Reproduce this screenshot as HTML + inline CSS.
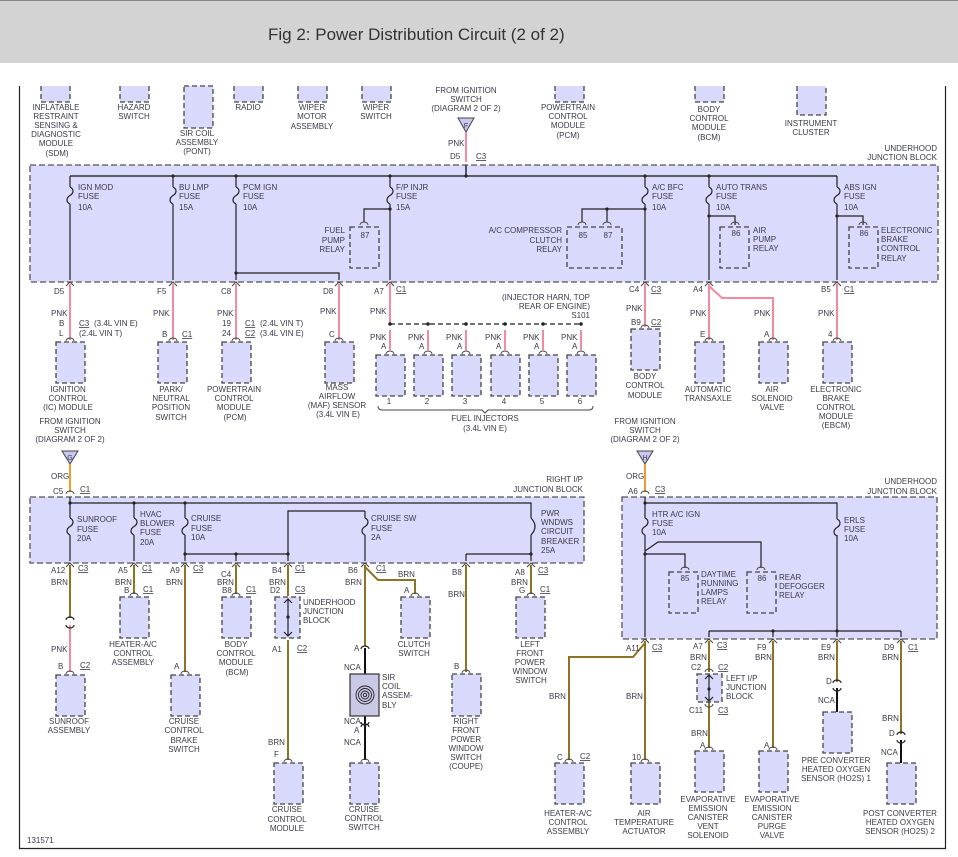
<!DOCTYPE html>
<html><head><meta charset="utf-8"><style>
html,body{margin:0;padding:0;background:#fff;width:958px;height:857px;overflow:hidden}
svg{display:block}
text{font-family:"Liberation Sans",sans-serif;font-size:8px;fill:#3a3a4a}
.m text,text.m{text-anchor:middle}
.r{text-anchor:end}
.b{fill:#d9d9fb;stroke:#444;stroke-width:1.3;stroke-dasharray:5,3}
.jb{fill:#dadafc;stroke:#555;stroke-width:1.3;stroke-dasharray:6,3}
.k{stroke:#222;stroke-width:1.2;fill:none}
.g{stroke:#555;stroke-width:1.2;fill:none}
.p{stroke:#f4899f;stroke-width:2;fill:none}
.n{stroke:#8c7424;stroke-width:2;fill:none}
.o{stroke:#f59a2c;stroke-width:2;fill:none}
.u{text-decoration:underline}
.a{stroke:#444;stroke-width:1;fill:none}
</style></head><body>
<svg width="958" height="857" viewBox="0 0 958 857" xmlns="http://www.w3.org/2000/svg">
<rect x="0" y="0" width="958" height="63" fill="#d3d3d3"/>
<line x1="0" y1="0.5" x2="958" y2="0.5" stroke="#888"/>
<text x="268" y="40" style="font-size:17px;fill:#333">Fig 2: Power Distribution Circuit (2 of 2)</text>
<path d="M19.5 86V848.5H945.5V86" stroke="#222" stroke-width="1.2" fill="none"/>

<!-- top components -->
<path class="b" d="M41 86V102H70V86"/>
<path class="b" d="M120 86V102H149V86"/>
<rect class="b" x="184" y="86" width="29" height="42"/>
<path class="b" d="M234 86V102H263V86"/>
<path class="b" d="M298 86V102H327V86"/>
<path class="b" d="M362 86V102H391V86"/>
<path class="b" d="M555 86V102H584V86"/>
<path class="b" d="M695 86V102H724V86"/>
<path class="b" d="M797 86V115H826V86"/>
<g class="m">
<text x="56" y="110">INFLATABLE</text><text x="56" y="119">RESTRAINT</text><text x="56" y="128">SENSING &amp;</text><text x="56" y="137">DIAGNOSTIC</text><text x="56" y="146">MODULE</text><text x="57" y="156">(SDM)</text>
<text x="134" y="110">HAZARD</text><text x="134" y="119">SWITCH</text>
<text x="197" y="136">SIR COIL</text><text x="197" y="145">ASSEMBLY</text><text x="197" y="154">(PONT)</text>
<text x="248" y="110">RADIO</text>
<text x="312" y="110">WIPER</text><text x="312" y="119">MOTOR</text><text x="312" y="129">ASSEMBLY</text>
<text x="376" y="110">WIPER</text><text x="376" y="119">SWITCH</text>
<text x="466" y="93">FROM IGNITION</text><text x="466" y="102">SWITCH</text><text x="466" y="111">(DIAGRAM 2 OF 2)</text>
<text x="568" y="110">POWERTRAIN</text><text x="568" y="119">CONTROL</text><text x="568" y="128">MODULE</text><text x="568" y="138">(PCM)</text>
<text x="709" y="112">BODY</text><text x="709" y="121">CONTROL</text><text x="709" y="130">MODULE</text><text x="709" y="140">(BCM)</text>
<text x="811" y="126">INSTRUMENT</text><text x="811" y="135">CLUSTER</text>
</g>
<path d="M458 118H474L466 132Z" fill="#c8c8f0" stroke="#444"/><text x="466" y="128" class="m" style="font-size:7px">F</text>
<path class="p" d="M466 132V162"/>
<text x="448" y="146">PNK</text><text x="450" y="159">D5</text><text x="476" y="159" class="u">C3</text>
<text x="937" y="151" class="r">UNDERHOOD</text><text x="937" y="160" class="r">JUNCTION BLOCK</text>

<!-- top junction block -->
<rect class="jb" x="30" y="165" width="908" height="117"/>
<path d="M70 176H837M466 165V176" stroke="#333" stroke-width="1.6" fill="none"/>
<g class="k">
<path d="M70 176V187M70 204V280"/>
<path d="M173 176V187M173 204V280"/>
<path d="M236 176V187M236 204V280M236 273H339V280"/>
<path d="M390 176V187M390 204V280M390 209H364V222"/>
<path d="M645 176V187M645 204V280M645 209H582V222M607 209V222"/>
<path d="M709 176V187M709 204V280M709 216H735V225"/>
<path d="M837 176V187M837 204V280M837 216H863V225"/>
<path d="M70 187c4 2 4 6 0 8.5c-4 2.5 -4 6.5 0 8.5M173 187c4 2 4 6 0 8.5c-4 2.5 -4 6.5 0 8.5M236 187c4 2 4 6 0 8.5c-4 2.5 -4 6.5 0 8.5M390 187c4 2 4 6 0 8.5c-4 2.5 -4 6.5 0 8.5M645 187c4 2 4 6 0 8.5c-4 2.5 -4 6.5 0 8.5M709 187c4 2 4 6 0 8.5c-4 2.5 -4 6.5 0 8.5M837 187c4 2 4 6 0 8.5c-4 2.5 -4 6.5 0 8.5"/>
</g>
<g fill="#222"><circle cx="173" cy="176" r="1.6"/><circle cx="236" cy="176" r="1.6"/><circle cx="390" cy="176" r="1.6"/><circle cx="466" cy="176" r="1.6"/><circle cx="645" cy="176" r="1.6"/><circle cx="709" cy="176" r="1.6"/><circle cx="236" cy="273" r="1.6"/><circle cx="390" cy="209" r="1.6"/><circle cx="645" cy="209" r="1.6"/><circle cx="607" cy="209" r="1.6"/><circle cx="709" cy="216" r="1.6"/><circle cx="837" cy="216" r="1.6"/></g>
<g>
<text x="78" y="190">IGN MOD</text><text x="78" y="199">FUSE</text><text x="78" y="210">10A</text>
<text x="179" y="190">BU LMP</text><text x="179" y="199">FUSE</text><text x="179" y="210">15A</text>
<text x="243" y="190">PCM IGN</text><text x="243" y="199">FUSE</text><text x="243" y="210">10A</text>
<text x="396" y="190">F/P INJR</text><text x="396" y="199">FUSE</text><text x="396" y="210">15A</text>
<text x="652" y="190">A/C BFC</text><text x="652" y="199">FUSE</text><text x="652" y="210">10A</text>
<text x="716" y="190">AUTO TRANS</text><text x="716" y="199">FUSE</text><text x="716" y="210">10A</text>
<text x="844" y="190">ABS IGN</text><text x="844" y="199">FUSE</text><text x="844" y="210">10A</text>
</g>
<rect class="b" x="350" y="227" width="29" height="41"/>
<rect class="b" x="567" y="227" width="55" height="41"/>
<rect class="b" x="720" y="227" width="29" height="41"/>
<rect class="b" x="849" y="227" width="29" height="41"/>
<g class="a"><path d="M360 225a4 3 0 0 1 8 0M578 225a4 3 0 0 1 8 0M603 225a4 3 0 0 1 8 0M731 225a4 3 0 0 1 8 0M859 225a4 3 0 0 1 8 0"/></g>
<g class="m"><text x="365" y="238">87</text><text x="583" y="238">85</text><text x="608" y="238">87</text><text x="736" y="236">86</text><text x="864" y="236">86</text></g>
<g class="r"><text x="345" y="233">FUEL</text><text x="345" y="243">PUMP</text><text x="345" y="252">RELAY</text>
<text x="562" y="233">A/C COMPRESSOR</text><text x="562" y="243">CLUTCH</text><text x="562" y="252">RELAY</text></g>
<text x="753" y="233">AIR</text><text x="753" y="242">PUMP</text><text x="753" y="251">RELAY</text>
<text x="881" y="233">ELECTRONIC</text><text x="881" y="242">BRAKE</text><text x="881" y="251">CONTROL</text><text x="881" y="261">RELAY</text>

<!-- below top block -->
<g class="a"><path d="M66 286l4-4 4 4M169 286l4-4 4 4M232 286l4-4 4 4M335 286l4-4 4 4M386 286l4-4 4 4M641 286l4-4 4 4M705 286l4-4 4 4M833 286l4-4 4 4"/></g>
<g><text x="54" y="294">D5</text><text x="157" y="294">F5</text><text x="221" y="294">C8</text><text x="323" y="294">D8</text><text x="374" y="294">A7</text><text x="396" y="292" class="u">C1</text>
<text x="629" y="292">C4</text><text x="651" y="292" class="u">C3</text><text x="693" y="292">A4</text><text x="821" y="292">B5</text><text x="844" y="292" class="u">C1</text></g>
<g class="p"><path d="M70 284V340M173 284V340M236 284V340M339 284V340M390 284V324M645 284V327M709 284V340M709 286L722 298H773V340M837 284V340"/>
<path d="M390 330V350M428 330V350M466 330V350M505 330V350M543 330V350M581 330V350"/></g>
<path d="M390 324H581" stroke="#222" stroke-dasharray="5,3" stroke-width="1.2"/>
<g fill="#222"><circle cx="390" cy="324" r="1.8"/><circle cx="428" cy="324" r="1.8"/><circle cx="466" cy="324" r="1.8"/><circle cx="505" cy="324" r="1.8"/><circle cx="543" cy="324" r="1.8"/><circle cx="581" cy="324" r="1.8"/></g>
<g class="r"><text x="590" y="300">(INJECTOR HARN, TOP</text><text x="590" y="309">REAR OF ENGINE)</text><text x="590" y="318">S101</text></g>
<g>
<text x="51" y="316">PNK</text><text x="59" y="326">B</text><text x="59" y="336">L</text><text x="79" y="326" class="u">C3</text><text x="94" y="326">(3.4L VIN E)</text><text x="79" y="336">(2.4L VIN T)</text>
<text x="153" y="316">PNK</text><text x="162" y="337">B</text><text x="182" y="337" class="u">C1</text>
<text x="217" y="316">PNK</text><text x="222" y="326">19</text><text x="222" y="336">24</text><text x="245" y="326" class="u">C1</text><text x="260" y="326">(2.4L VIN T)</text><text x="245" y="336" class="u">C2</text><text x="260" y="336">(3.4L VIN E)</text>
<text x="320" y="314">PNK</text><text x="329" y="337">C</text>
<text x="370" y="314">PNK</text>
<text x="370" y="340">PNK</text><text x="408" y="340">PNK</text><text x="446" y="340">PNK</text><text x="485" y="340">PNK</text><text x="523" y="340">PNK</text><text x="561" y="340">PNK</text>
<text x="381" y="349">A</text><text x="419" y="349">A</text><text x="457" y="349">A</text><text x="496" y="349">A</text><text x="534" y="349">A</text><text x="572" y="349">A</text>
<text x="626" y="311">PNK</text><text x="631" y="325">B9</text><text x="651" y="325" class="u">C2</text>
<text x="690" y="316">PNK</text><text x="700" y="337">E</text>
<text x="754" y="316">PNK</text><text x="764" y="337">A</text>
<text x="818" y="316">PNK</text><text x="828" y="337">4</text>
</g>
<rect class="b" x="56" y="342" width="29" height="41"/>
<rect class="b" x="158" y="342" width="29" height="41"/>
<rect class="b" x="222" y="342" width="29" height="41"/>
<rect class="b" x="325" y="342" width="29" height="41"/>
<rect class="b" x="376" y="355" width="29" height="41"/>
<rect class="b" x="414" y="355" width="29" height="41"/>
<rect class="b" x="452" y="355" width="29" height="41"/>
<rect class="b" x="491" y="355" width="29" height="41"/>
<rect class="b" x="529" y="355" width="29" height="41"/>
<rect class="b" x="567" y="355" width="29" height="41"/>
<rect class="b" x="631" y="329" width="29" height="41"/>
<rect class="b" x="695" y="342" width="29" height="41"/>
<rect class="b" x="759" y="342" width="29" height="41"/>
<rect class="b" x="823" y="342" width="29" height="41"/>
<g class="a"><path d="M66 341a4 3 0 0 1 8 0M169 341a4 3 0 0 1 8 0M232 341a4 3 0 0 1 8 0M335 341a4 3 0 0 1 8 0M386 354a4 3 0 0 1 8 0M424 354a4 3 0 0 1 8 0M462 354a4 3 0 0 1 8 0M501 354a4 3 0 0 1 8 0M539 354a4 3 0 0 1 8 0M577 354a4 3 0 0 1 8 0M641 328a4 3 0 0 1 8 0M705 341a4 3 0 0 1 8 0M769 341a4 3 0 0 1 8 0M833 341a4 3 0 0 1 8 0"/>
<path d="M378 406q0 4 4 4H482l3 3 3-3H589q4 0 4-4"/></g>
<g class="m">
<text x="389" y="404">1</text><text x="427" y="404">2</text><text x="465" y="404">3</text><text x="504" y="404">4</text><text x="542" y="404">5</text><text x="580" y="404">6</text>
<text x="485" y="421">FUEL INJECTORS</text><text x="485" y="431">(3.4L VIN E)</text>
<text x="68" y="392">IGNITION</text><text x="68" y="401">CONTROL</text><text x="68" y="410">(IC) MODULE</text>
<text x="171" y="392">PARK/</text><text x="171" y="401">NEUTRAL</text><text x="171" y="410">POSITION</text><text x="171" y="420">SWITCH</text>
<text x="234" y="392">POWERTRAIN</text><text x="234" y="401">CONTROL</text><text x="234" y="410">MODULE</text><text x="235" y="420">(PCM)</text>
<text x="337" y="390">MASS</text><text x="337" y="399">AIRFLOW</text><text x="337" y="408">(MAF) SENSOR</text><text x="338" y="417">(3.4L VIN E)</text>
<text x="645" y="379">BODY</text><text x="645" y="388">CONTROL</text><text x="645" y="398">MODULE</text>
<text x="708" y="392">AUTOMATIC</text><text x="708" y="401">TRANSAXLE</text>
<text x="772" y="392">AIR</text><text x="772" y="401">SOLENOID</text><text x="772" y="410">VALVE</text>
<text x="836" y="392">ELECTRONIC</text><text x="836" y="401">BRAKE</text><text x="836" y="410">CONTROL</text><text x="836" y="419">MODULE</text><text x="836" y="428">(EBCM)</text>
<text x="70" y="424">FROM IGNITION</text><text x="70" y="433">SWITCH</text><text x="70" y="442">(DIAGRAM 2 OF 2)</text>
<text x="645" y="424">FROM IGNITION</text><text x="645" y="433">SWITCH</text><text x="645" y="442">(DIAGRAM 2 OF 2)</text>
</g>

<!-- lower feeds -->
<path d="M62 451H78L70 464Z" fill="#c8c8f0" stroke="#444"/><text x="70" y="460" class="m" style="font-size:7px">G</text>
<path d="M637 451H653L645 464Z" fill="#c8c8f0" stroke="#444"/><text x="645" y="460" class="m" style="font-size:7px">H</text>
<path class="o" d="M70 464V492M645 464V492"/>
<g class="a"><path d="M66 494a4 3 0 0 1 8 0M641 494a4 3 0 0 1 8 0"/></g>
<text x="51" y="479">ORG</text><text x="53" y="494">C5</text><text x="80" y="492" class="u">C1</text>
<text x="626" y="479">ORG</text><text x="628" y="494">A6</text><text x="655" y="492" class="u">C3</text>
<g class="r"><text x="583" y="482">RIGHT I/P</text><text x="583" y="492">JUNCTION BLOCK</text><text x="937" y="484">UNDERHOOD</text><text x="937" y="494">JUNCTION BLOCK</text></g>

<!-- lower left block -->
<rect class="jb" x="30" y="497" width="554" height="66"/>
<g class="k">
<path d="M70 497V518M70 535V561M70 503H531V518M531 535V561M466 554H531M466 554V561"/>
<path d="M134 503V518M134 535V561M185 503V518M185 535V561M185 554H288M288 554V561M288 554V511H365M365 511V518M365 535V561"/>
<path d="M70 518c4 2 4 6 0 8.5c-4 2.5 -4 6.5 0 8.5M134 518c4 2 4 6 0 8.5c-4 2.5 -4 6.5 0 8.5M185 518c4 2 4 6 0 8.5c-4 2.5 -4 6.5 0 8.5M365 518c4 2 4 6 0 8.5c-4 2.5 -4 6.5 0 8.5M531 518q8 8.5 0 17"/>
<path d="M236 554V561"/>
</g>
<g fill="#222"><circle cx="70" cy="503" r="1.6"/><circle cx="134" cy="503" r="1.6"/><circle cx="185" cy="503" r="1.6"/><circle cx="236" cy="554" r="1.6"/><circle cx="288" cy="554" r="1.6"/><circle cx="185" cy="554" r="1.6"/><circle cx="531" cy="554" r="1.6"/></g>
<text x="77" y="522">SUNROOF</text><text x="77" y="532">FUSE</text><text x="77" y="541">20A</text>
<text x="140" y="517">HVAC</text><text x="140" y="526">BLOWER</text><text x="140" y="535">FUSE</text><text x="140" y="545">20A</text>
<text x="191" y="521">CRUISE</text><text x="191" y="531">FUSE</text><text x="191" y="540">10A</text>
<text x="371" y="521">CRUISE SW</text><text x="371" y="531">FUSE</text><text x="371" y="540">2A</text>
<text x="541" y="516">PWR</text><text x="541" y="525">WNDWS</text><text x="541" y="534">CIRCUIT</text><text x="541" y="544">BREAKER</text><text x="541" y="553">25A</text>

<!-- lower right block -->
<rect class="jb" x="622" y="497" width="315" height="142"/>
<g class="k">
<path d="M645 497V518M645 535V637M645 503H837V519M837 535V637"/>
<path d="M645 554H685V568M645 551L658 542H761V568"/>
<path d="M709 631H901M709 631V637M773 631V637M901 631V637"/>
<path d="M645 518c4 2 4 6 0 8.5c-4 2.5 -4 6.5 0 8.5M837 519c4 2 4 6 0 8.5c-4 2.5 -4 6.5 0 8.5"/>
</g>
<g fill="#222"><circle cx="645" cy="503" r="1.6"/><circle cx="645" cy="554" r="1.6"/><circle cx="773" cy="631" r="1.6"/><circle cx="837" cy="631" r="1.6"/></g>
<rect class="b" x="669" y="572" width="29" height="41"/>
<rect class="b" x="747" y="572" width="29" height="41"/>
<g class="a"><path d="M681 570a4 3 0 0 1 8 0M757 570a4 3 0 0 1 8 0"/></g>
<g class="m"><text x="685" y="581">85</text><text x="762" y="581">86</text></g>
<text x="652" y="517">HTR A/C IGN</text><text x="652" y="526">FUSE</text><text x="652" y="535">10A</text>
<text x="844" y="523">ERLS</text><text x="844" y="532">FUSE</text><text x="844" y="541">10A</text>
<text x="701" y="577">DAYTIME</text><text x="701" y="586">RUNNING</text><text x="701" y="595">LAMPS</text><text x="701" y="604">RELAY</text>
<text x="779" y="580">REAR</text><text x="779" y="589">DEFOGGER</text><text x="779" y="598">RELAY</text>

<!-- lower left outputs -->
<g class="a"><path d="M66 567l4-4 4 4M130 567l4-4 4 4M181 567l4-4 4 4M232 567l4-4 4 4M284 567l4-4 4 4M361 567l4-4 4 4M462 567l4-4 4 4M527 567l4-4 4 4
M641 643l4-4 4 4M705 643l4-4 4 4M769 643l4-4 4 4M833 643l4-4 4 4M897 643l4-4 4 4"/></g>
<g class="n">
<path d="M70 565V618M134 565V594M185 565V672M236 565V594M288 565V596M288 640V760M365 565V646M365 567L378 580H415V594M466 565V672M531 565V594"/>
<path d="M645 641V760M645 643L633 657H569V760M709 641V672M709 702V748M773 641V748M837 641V682M901 641V734"/>
</g>
<path class="p" d="M70 625V672"/>
<path class="k" d="M66 620a4 3 0 0 1 8 0M66 625a4 3 0 0 0 8 0"/>
<path d="M365 648V674M365 716V760M837 688V712M901 740V763" stroke="#111" stroke-width="2" fill="none"/>
<g class="k"><path d="M361 649a4 3 0 0 1 8 0M361 722a4 3 0 0 0 8 0M361 727a4 3 0 0 1 8 0M833 683a4 3 0 0 1 8 0M833 688a4 3 0 0 0 8 0M897 735a4 3 0 0 1 8 0M897 740a4 3 0 0 0 8 0"/></g>
<g>
<text x="51" y="573">A12</text><text x="78" y="571" class="u">C3</text>
<text x="118" y="573">A5</text><text x="142" y="571" class="u">C1</text>
<text x="170" y="573">A9</text><text x="193" y="571" class="u">C3</text>
<text x="221" y="577">C4</text><text x="272" y="573">B4</text><text x="295" y="571" class="u">C1</text>
<text x="348" y="573">B6</text><text x="376" y="571" class="u">C1</text>
<text x="452" y="575">B8</text><text x="515" y="575">A8</text><text x="538" y="573" class="u">C3</text>
<text x="51" y="585">BRN</text><text x="115" y="585">BRN</text><text x="166" y="585">BRN</text><text x="217" y="585">BRN</text><text x="269" y="585">BRN</text><text x="345" y="585">BRN</text><text x="398" y="577">BRN</text><text x="448" y="597">BRN</text><text x="511" y="585">BRN</text>
<text x="124" y="593">B</text><text x="143" y="592" class="u">C1</text>
<text x="222" y="593">B8</text><text x="246" y="592" class="u">C1</text>
<text x="270" y="593">D2</text><text x="295" y="592" class="u">C3</text>
<text x="404" y="593">A</text><text x="519" y="593">G</text><text x="540" y="592" class="u">C1</text>
<text x="51" y="652">PNK</text><text x="58" y="669">B</text><text x="80" y="668" class="u">C2</text>
<text x="174" y="669">A</text><text x="272" y="652">A1</text><text x="297" y="651" class="u">C2</text>
<text x="354" y="651">A</text><text x="344" y="670">NCA</text><text x="344" y="724">NCA</text><text x="354" y="733">A</text><text x="344" y="745">NCA</text>
<text x="454" y="669">B</text><text x="268" y="745">BRN</text><text x="274" y="757">F</text>
</g>
<rect class="b" x="56" y="675" width="29" height="41"/>
<rect class="b" x="120" y="597" width="29" height="41"/>
<rect class="b" x="171" y="675" width="29" height="41"/>
<rect class="b" x="222" y="597" width="29" height="41"/>
<rect class="b" x="275" y="597" width="25" height="41"/>
<rect class="b" x="274" y="763" width="29" height="41"/>
<rect class="b" x="401" y="597" width="29" height="41"/>
<rect class="b" x="350" y="763" width="29" height="41"/>
<rect class="b" x="452" y="674" width="29" height="42"/>
<rect class="b" x="516" y="597" width="29" height="41"/>
<rect x="350" y="674" width="29" height="42" fill="#c9c9e6" stroke="#333" stroke-width="1.2"/>
<g fill="none" stroke="#222" stroke-width="0.9"><circle cx="365" cy="695" r="9"/><circle cx="365" cy="695" r="6.5"/><circle cx="365" cy="695" r="4"/><circle cx="365" cy="695" r="1.7"/></g>
<path class="k" d="M288 599V636M284 603l4-4 4 4M284 632l4 4 4-4"/><circle cx="288" cy="617" r="1.6" fill="#222"/>
<g class="a"><path d="M66 674a4 3 0 0 1 8 0M130 596a4 3 0 0 1 8 0M181 674a4 3 0 0 1 8 0M232 596a4 3 0 0 1 8 0M284 762a4 3 0 0 1 8 0M411 596a4 3 0 0 1 8 0M361 762a4 3 0 0 1 8 0M462 673a4 3 0 0 1 8 0M527 596a4 3 0 0 1 8 0"/></g>
<text x="303" y="605">UNDERHOOD</text><text x="303" y="614">JUNCTION</text><text x="303" y="623">BLOCK</text>
<text x="382" y="680">SIR</text><text x="382" y="689">COIL</text><text x="382" y="698">ASSEM-</text><text x="382" y="708">BLY</text>
<g class="m">
<text x="69" y="724">SUNROOF</text><text x="69" y="733">ASSEMBLY</text>
<text x="133" y="647">HEATER-A/C</text><text x="133" y="656">CONTROL</text><text x="133" y="665">ASSEMBLY</text>
<text x="184" y="724">CRUISE</text><text x="184" y="733">CONTROL</text><text x="184" y="743">BRAKE</text><text x="184" y="752">SWITCH</text>
<text x="236" y="647">BODY</text><text x="236" y="656">CONTROL</text><text x="236" y="665">MODULE</text><text x="237" y="675">(BCM)</text>
<text x="287" y="812">CRUISE</text><text x="287" y="822">CONTROL</text><text x="287" y="831">MODULE</text>
<text x="364" y="812">CRUISE</text><text x="364" y="821">CONTROL</text><text x="364" y="830">SWITCH</text>
<text x="414" y="647">CLUTCH</text><text x="414" y="656">SWITCH</text>
<text x="466" y="724">RIGHT</text><text x="466" y="733">FRONT</text><text x="466" y="742">POWER</text><text x="466" y="751">WINDOW</text><text x="466" y="760">SWITCH</text><text x="466" y="769">(COUPE)</text>
<text x="530" y="647">LEFT</text><text x="530" y="656">FRONT</text><text x="530" y="665">POWER</text><text x="530" y="674">WINDOW</text><text x="531" y="683">SWITCH</text>
</g>

<!-- lower right outputs -->
<g>
<text x="626" y="651">A11</text><text x="652" y="650" class="u">C3</text>
<text x="693" y="649">A7</text><text x="717" y="648" class="u">C3</text><text x="690" y="660">BRN</text>
<text x="757" y="650">F9</text><text x="755" y="660">BRN</text>
<text x="821" y="650">E9</text><text x="818" y="660">BRN</text>
<text x="884" y="650">D9</text><text x="908" y="650" class="u">C1</text><text x="882" y="660">BRN</text>
<text x="549" y="699">BRN</text><text x="626" y="699">BRN</text>
<text x="691" y="670">C2</text><text x="718" y="670" class="u">C2</text>
<text x="689" y="713">C11</text><text x="718" y="713" class="u">C3</text>
<text x="691" y="736">BRN</text><text x="700" y="748">A</text><text x="764" y="748">A</text>
<text x="826" y="684">D</text><text x="818" y="703">NCA</text>
<text x="882" y="721">BRN</text><text x="889" y="736">D</text><text x="881" y="755">NCA</text>
<text x="557" y="760">C</text><text x="580" y="759" class="u">C2</text><text x="632" y="760">10</text>
<text x="726" y="681">LEFT I/P</text><text x="726" y="690">JUNCTION</text><text x="726" y="699">BLOCK</text>
<text x="27" y="843">131571</text>
</g>
<rect class="b" x="697" y="674" width="25" height="28"/>
<path class="k" d="M709 676V700M705 679l4-4 4 4M705 697l4 4 4-4"/><circle cx="709" cy="689" r="1.6" fill="#222"/>
<rect class="b" x="555" y="763" width="29" height="41"/>
<rect class="b" x="631" y="763" width="29" height="41"/>
<rect class="b" x="695" y="751" width="29" height="41"/>
<rect class="b" x="759" y="751" width="29" height="41"/>
<rect class="b" x="823" y="712" width="29" height="41"/>
<rect class="b" x="887" y="763" width="29" height="41"/>
<g class="a"><path d="M565 762a4 3 0 0 1 8 0M641 762a4 3 0 0 1 8 0M705 750a4 3 0 0 1 8 0M769 750a4 3 0 0 1 8 0M705 672a4 3 0 0 1 8 0M705 704a4 3 0 0 0 8 0"/></g>
<g class="m">
<text x="568" y="816">HEATER-A/C</text><text x="568" y="825">CONTROL</text><text x="568" y="834">ASSEMBLY</text>
<text x="644" y="816">AIR</text><text x="644" y="825">TEMPERATURE</text><text x="644" y="834">ACTUATOR</text>
<text x="708" y="802">EVAPORATIVE</text><text x="708" y="811">EMISSION</text><text x="708" y="820">CANISTER</text><text x="708" y="829">VENT</text><text x="708" y="838">SOLENOID</text>
<text x="772" y="802">EVAPORATIVE</text><text x="772" y="811">EMISSION</text><text x="772" y="820">CANISTER</text><text x="772" y="829">PURGE</text><text x="772" y="838">VALVE</text>
<text x="836" y="763">PRE CONVERTER</text><text x="836" y="772">HEATED OXYGEN</text><text x="836" y="781">SENSOR (HO2S) 1</text>
<text x="900" y="816">POST CONVERTER</text><text x="900" y="825">HEATED OXYGEN</text><text x="900" y="834">SENSOR (HO2S) 2</text>
</g>
</svg>
</body></html>
